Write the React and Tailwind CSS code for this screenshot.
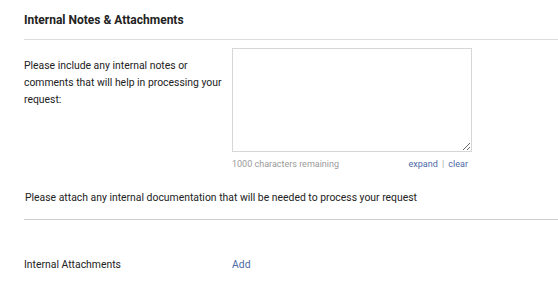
export default function App() {
  return (
    <div className="w-[558px] h-[306px] bg-white text-[#222] font-['Roboto',sans-serif] overflow-hidden">
      <div className="ml-6 h-[40px] border-b border-[#dcdcdc] pt-[12px]">
        <h2 className="text-[12px] font-bold leading-[16px] text-[#222]">Internal Notes &amp; Attachments</h2>
      </div>

      <div className="flex pl-6 pt-[8px]">
        <div className="w-[208px] text-[10.4px] leading-[17px] pt-[9px] pr-1">
          Please include any internal notes or comments that will help in processing your request:
        </div>
        <div className="w-[240px]">
          <textarea className="block w-[240px] h-[104px] border border-[#d6d6d6] resize-y outline-none text-[10px] p-1" />
          <div className="flex justify-between items-center text-[9px] leading-[12px] mt-[6px] pr-[4px]">
            <span className="text-[#9a9a9a]">1000 characters remaining</span>
            <span className="text-[#4d6aa6]">
              expand <span className="text-[#aaa] mx-[2px]">|</span> clear
            </span>
          </div>
        </div>
      </div>

      <div className="ml-6 pt-[21px] h-[50px] border-b border-[#cfcfcf] text-[10.4px] leading-[14px] pl-px">
        Please attach any internal documentation that will be needed to process your request
      </div>

      <div className="flex pl-6 pt-[38px] text-[10.4px] leading-[14px]">
        <div className="w-[208px]">Internal Attachments</div>
        <div className="text-[#4d6aa6]">Add</div>
      </div>
    </div>
  );
}
